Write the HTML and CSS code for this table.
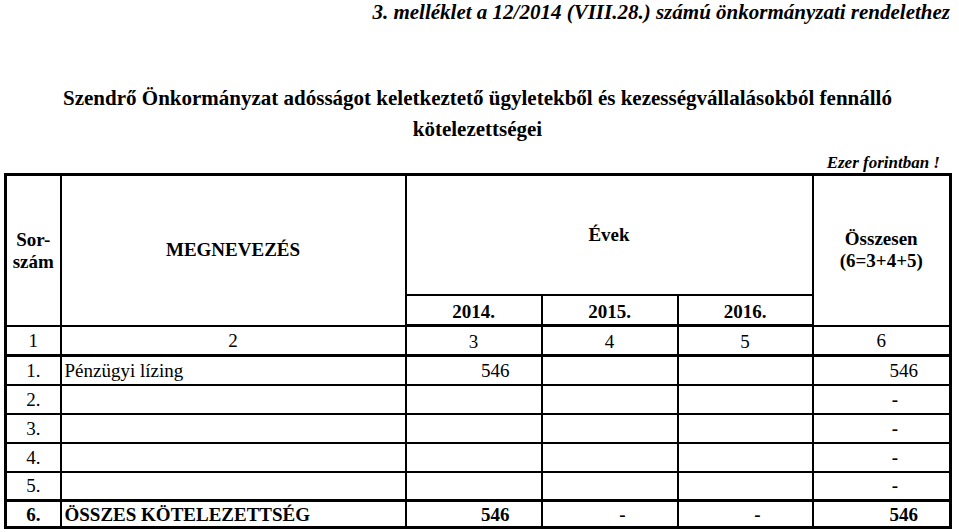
FILE: index.html
```html
<!DOCTYPE html>
<html lang="hu">
<head>
<meta charset="utf-8">
<title>3. melléklet</title>
<link rel="stylesheet" href="styles.css">
</head>
<body>
<div class="page">
  <p class="annex">3. melléklet a 12/2014 (VIII.28.) számú önkormányzati rendelethez</p>
  <h1 class="title">Szendrő Önkormányzat adósságot keletkeztető ügyletekből és kezességvállalásokból fennálló<br>kötelezettségei</h1>
  <p class="unit">Ezer forintban !</p>
  <table class="tbl">
    <colgroup>
      <col class="c1"><col class="c2"><col class="c3"><col class="c4"><col class="c5"><col class="c6">
    </colgroup>
    <thead>
      <tr class="hA">
        <th rowspan="2" class="sor">Sor-<br>szám</th>
        <th rowspan="2" class="megn">MEGNEVEZÉS</th>
        <th colspan="3" class="evek">Évek</th>
        <th rowspan="2" class="ossz">Összesen<br>(6=3+4+5)</th>
      </tr>
      <tr class="hB">
        <th>2014.</th><th>2015.</th><th>2016.</th>
      </tr>
    </thead>
    <tbody>
      <tr class="nums">
        <td>1</td><td>2</td><td>3</td><td>4</td><td>5</td><td>6</td>
      </tr>
      <tr class="row first">
        <td class="idx">1.</td><td class="name">Pénzügyi lízing</td><td class="num">546</td><td></td><td></td><td class="num">546</td>
      </tr>
      <tr class="row">
        <td class="idx">2.</td><td></td><td></td><td></td><td></td><td class="num"><span class="dash">-</span></td>
      </tr>
      <tr class="row">
        <td class="idx">3.</td><td></td><td></td><td></td><td></td><td class="num"><span class="dash">-</span></td>
      </tr>
      <tr class="row">
        <td class="idx">4.</td><td></td><td></td><td></td><td></td><td class="num"><span class="dash">-</span></td>
      </tr>
      <tr class="row">
        <td class="idx">5.</td><td></td><td></td><td></td><td></td><td class="num"><span class="dash">-</span></td>
      </tr>
      <tr class="row total">
        <td class="idx">6.</td><td class="name">ÖSSZES KÖTELEZETTSÉG</td><td class="num">546</td><td class="num"><span class="dash">-</span></td><td class="num"><span class="dash">-</span></td><td class="num">546</td>
      </tr>
    </tbody>
  </table>
</div>
</body>
</html>
```

FILE: styles.css
```css
html, body {
  margin: 0;
  padding: 0;
  background: #ffffff;
}
body {
  font-family: "Liberation Serif", "Times New Roman", serif;
  color: #000000;
}
.page {
  width: 959px;
  padding: 0 0 0 4px;
  box-sizing: border-box;
}
.annex {
  margin: 0;
  padding: 1px 9px 0 0;
  height: 23px;
  text-align: right;
  font-size: 21px;
  font-weight: bold;
  font-style: italic;
  line-height: 23px;
}
.title {
  margin: 59px 0 0 0;
  padding-right: 8px;
  text-align: center;
  font-size: 21px;
  font-weight: bold;
  line-height: 31px;
}
.unit {
  margin: 0;
  padding: 8px 19px 0 0;
  height: 20px;
  text-align: right;
  font-size: 17px;
  font-style: italic;
  font-weight: bold;
  line-height: 20px;
}
.tbl {
  margin-top: 0;
  border-collapse: collapse;
  table-layout: fixed;
  width: 945px;
  border: 3px solid #000;
}
.c1 { width: 55px; }
.c2 { width: 345px; }
.c3 { width: 136px; }
.c4 { width: 136px; }
.c5 { width: 135px; }
.c6 { width: 138px; }
.tbl th, .tbl td {
  border: 2px solid #000;
  padding: 0;
  font-size: 19px;
}
.tbl th {
  font-weight: bold;
  text-align: center;
  vertical-align: middle;
}
.hA { height: 120px; }
.hA th { line-height: 22px; }
.hA .sor { padding-top: 2px; }
.hB { height: 31px; }
.hB th { border-bottom: 3px solid #000; padding-top: 5px; line-height: 22px; }
.nums { height: 30px; }
.nums td {
  text-align: center;
  border-bottom: 3px solid #000;
  padding-top: 2px;
  line-height: 22px;
}
.row { height: 29px; }
.row td { vertical-align: middle; padding-top: 1px; line-height: 22px; }
.row .idx { text-align: center; }
.row .name { text-align: left; padding-left: 3px; }
.row .num { text-align: right; padding-right: 31px; }
.row .num .dash { display: inline-block; padding-right: 20px; font-weight: bold; }
.total { height: 27px; }
.total td { border-top: 3px solid #000; font-weight: bold; }
```
